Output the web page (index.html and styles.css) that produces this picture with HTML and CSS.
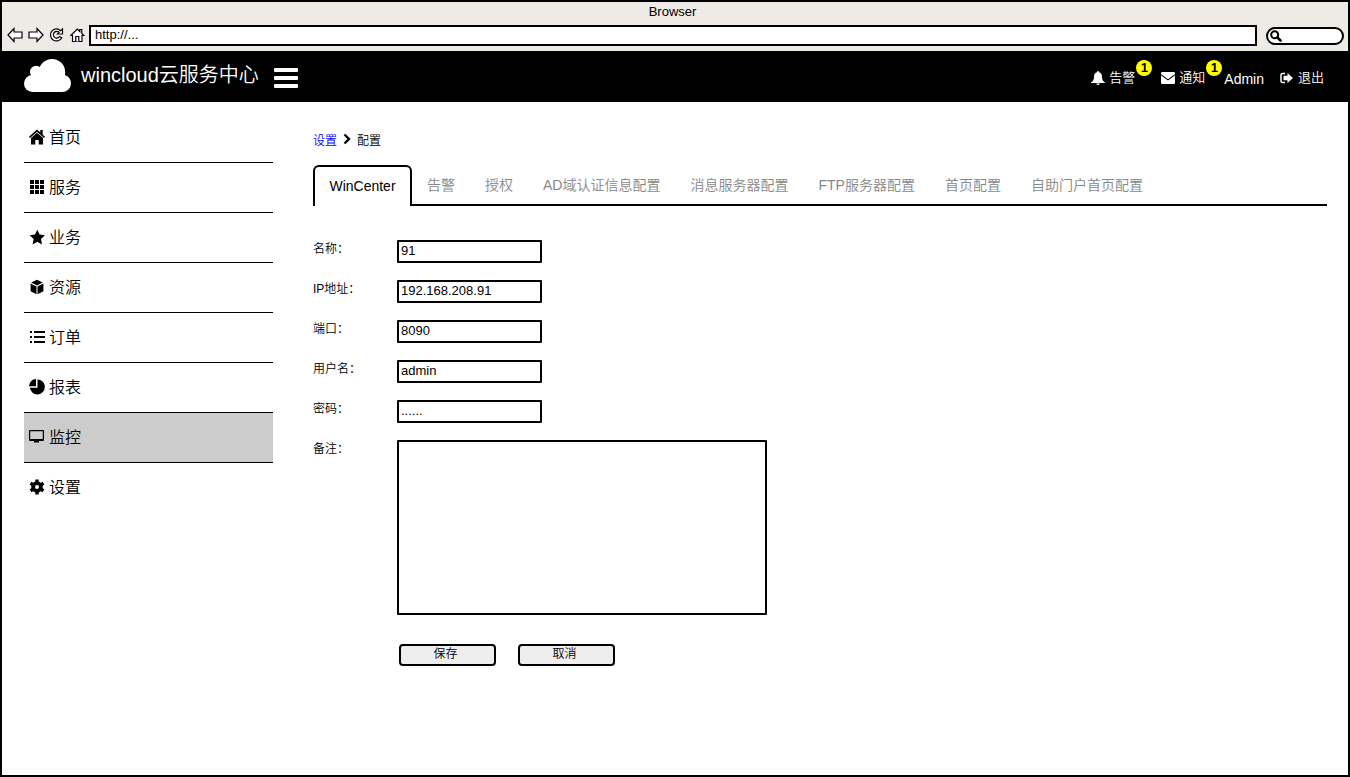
FILE: index.html
```html
<!DOCTYPE html>
<html lang="zh-CN">
<head>
<meta charset="utf-8">
<title>wincloud云服务中心</title>
<link rel="stylesheet" href="styles.css">
</head>
<body>
<div class="window">
  <div class="chrome">
    <div class="chrome-title">Browser</div>
    <div class="toolbar">
      <div class="tools">
        <button class="tool" type="button" aria-label="Back"><svg width="16" height="16" viewBox="0 0 16 16"><path d="M1 8 7 1.500V5h8v6H7v3.500Z"/></svg></button>
        <button class="tool" type="button" aria-label="Forward"><svg width="16" height="16" viewBox="0 0 16 16"><path d="M15 8 9 1.500V5H1v6h8v3.500Z"/></svg></button>
        <button class="tool" type="button" aria-label="Reload"><svg width="16" height="16" viewBox="0 0 16 16"><path d="M13.500 2v5H8.500l1.600-1.700A3.400 3.400 0 1 0 10.500 9.700l2.300 1A6 6 0 1 1 11.700 3.700Z"/></svg></button>
        <button class="tool" type="button" aria-label="Home"><svg width="16" height="16" viewBox="0 0 16 16"><path d="M.8 8.500 7.300 2l2.500 2.500V2.500h2v4l2 2H12V14.500H2.500V8.500Z"/><path d="M5.800 14.500V9.500h3v5"/></svg></button>
      </div>
      <input class="address" type="text" aria-label="Address" value="http://...">
      <label class="search">
        <svg width="12" height="12" viewBox="0 0 12 12"><circle cx="4.700" cy="4.700" r="3.500" fill="none" stroke="#000" stroke-width="2"/><path d="m7.300 7.300 3.200 3.200" stroke="#000" stroke-width="2.600" stroke-linecap="round"/></svg>
        <input class="search-input" type="text" aria-label="Search">
      </label>
    </div>
  </div>

  <header class="header">
    <svg class="cloud" width="47" height="33" viewBox="0 0 47 33" fill="#fff"><circle cx="28" cy="13.200" r="13.200"/><circle cx="12.200" cy="13" r="6.200"/><circle cx="8.500" cy="24.500" r="8.500"/><circle cx="38.200" cy="24.200" r="8.800"/><path d="M8.500 33V15L16 9l22 8v16Z"/></svg>
    <div class="brand">wincloud云服务中心</div>
    <button class="menu" type="button" aria-label="菜单"><span></span><span></span><span></span></button>
    <nav class="account">
      <a class="link" href="#"><svg width="14" height="14" viewBox="0 0 14 14" fill="#fff"><path d="M7 0q1 0 1 1.200Q11 2 11 6q0 3.500 3 5.500v.5H0v-.5Q3 9.500 3 6 3 2 6 1.200 6 0 7 0ZM5.300 12.500h3.400Q8.500 14 7 14T5.300 12.500Z"/></svg>告警</a><span class="badge">1</span>
      <a class="link notice" href="#"><svg width="14" height="12" viewBox="0 0 14 12" fill="#fff"><path d="M1.200 0h11.600Q14 0 14 1.200v.8L7 7.200 0 2v-.8Q0 0 1.200 0ZM0 3.300l7 5.200 7-5.200v7.500Q14 12 12.800 12H1.200Q0 12 0 10.800Z"/></svg>通知</a><span class="badge">1</span>
      <a class="user" href="#">Admin</a>
      <a class="link exit" href="#"><svg width="14" height="12" viewBox="0 0 14 12"><path d="M5 1.500H2.500Q1 1.500 1 3v6q0 1.500 1.500 1.500H5" fill="none" stroke="#fff" stroke-width="1.500"/><path d="M7.500 1 13 6l-5.500 5V8.200h-4V3.800h4Z" fill="#fff"/></svg>退出</a>
    </nav>
  </header>

  <div class="body">
    <nav class="sidebar">
      <a class="item" href="#"><svg width="16" height="16" viewBox="0 0 16 16"><path d="M8 .6 11.300 3.500V1h2.400v4.700L16 7.800l-1 1.200L8 2.800 1 9 0 7.800Z"/><path d="m8 3.700 6 5.300V15.500H9.700V11H6.300v4.500H2V9Z"/></svg>首页</a>
      <a class="item" href="#"><svg width="16" height="16" viewBox="0 0 16 16"><path d="M1 1h4v4H1zM6 1h4v4H6zM11 1h4v4h-4zM1 6h4v4H1zM6 6h4v4H6zM11 6h4v4h-4zM1 11h4v4H1zM6 11h4v4H6zM11 11h4v4h-4z"/></svg>服务</a>
      <a class="item" href="#"><svg width="16" height="16" viewBox="0 0 16 16"><path d="m8.300.7 2.300 4.800 5.300.8-3.900 3.700 1 5.400-4.700-2.600-4.700 2.600 1-5.400L.7 6.300 6 5.500Z"/></svg>业务</a>
      <a class="item" href="#"><svg width="16" height="16" viewBox="0 0 16 16"><path d="M8 .8 13.800 3.500 8 6.400 2.200 3.500ZM1.600 4.600l5.900 3V15.200l-5.900-3ZM14.400 4.600 8.500 7.600V15.200l5.900-3Z"/></svg>资源</a>
      <a class="item" href="#"><svg width="16" height="16" viewBox="0 0 16 16"><path d="M1 2h2v2H1zM5 2h11v2H5zM1 7h2v2H1zM5 7h11v2H5zM1 12h2v2H1zM5 12h11v2H5z"/></svg>订单</a>
      <a class="item" href="#"><svg width="16" height="16" viewBox="0 0 16 16"><path d="M8.500.400A7.500 7.500 0 1 1 .900 8.700h7.600ZM7 0v7.300H0A7.200 7.200 0 0 1 7 0Z"/></svg>报表</a>
      <a class="item active" href="#"><svg width="16" height="16" viewBox="0 0 16 16"><path fill-rule="evenodd" d="M1 1h13q1 0 1 1v9q0 1-1 1H10v1.500H5V12H1q-1 0-1-1V2q0-1 1-1Zm.2 1.200V10h12.600V2.200Z"/></svg>监控</a>
      <a class="item" href="#"><svg width="16" height="16" viewBox="0 0 16 16"><circle cx="8" cy="8" r="3.900" fill="none" stroke="#000" stroke-width="3.800"/><path d="M8 .5v3M8 12.500v3M1.500 4.250l2.600 1.500M11.900 10.250l2.600 1.500M1.500 11.750l2.600-1.500M11.900 5.750l2.600-1.500" stroke="#000" stroke-width="3.400"/></svg>设置</a>
    </nav>

    <main class="main">
      <nav class="crumbs">
        <a href="#">设置</a>
        <svg width="8" height="12" viewBox="0 0 8 12"><path d="m1.500 1.500 4.500 4.500-4.500 4.500" fill="none" stroke="#000" stroke-width="2.400"/></svg>
        <span>配置</span>
      </nav>
      <div class="tabs" role="tablist">
        <button class="tab current" type="button" role="tab" aria-selected="true">WinCenter</button>
        <button class="tab" type="button" role="tab">告警</button>
        <button class="tab" type="button" role="tab">授权</button>
        <button class="tab" type="button" role="tab">AD域认证信息配置</button>
        <button class="tab" type="button" role="tab">消息服务器配置</button>
        <button class="tab" type="button" role="tab">FTP服务器配置</button>
        <button class="tab" type="button" role="tab">首页配置</button>
        <button class="tab" type="button" role="tab">自助门户首页配置</button>
      </div>
      <form class="form">
        <label for="name">名称：</label><input class="field" id="name" type="text" value="91">
        <label for="ip">IP地址：</label><input class="field" id="ip" type="text" value="192.168.208.91">
        <label for="port">端口：</label><input class="field" id="port" type="text" value="8090">
        <label for="user">用户名：</label><input class="field" id="user" type="text" value="admin">
        <label for="pass">密码：</label><input class="field" id="pass" type="text" value="......">
        <label for="note">备注：</label><textarea class="field note" id="note"></textarea>
        <div class="actions">
          <button class="btn" type="button">保存</button>
          <button class="btn" type="button">取消</button>
        </div>
      </form>
    </main>
  </div>
</div>
</body>
</html>
```
FILE: styles.css
```css
* { box-sizing: border-box; }
body {
  margin: 0;
  font-family: "Liberation Sans", "Noto Sans CJK SC", sans-serif;
  font-size: 13px;
  font-weight: 350;
  color: #000;
}
button, input, textarea { font: inherit; color: inherit; margin: 0; }
a { color: inherit; text-decoration: none; }
svg { display: block; flex: none; }

.window {
  display: flex;
  flex-direction: column;
  min-height: 100vh;
  border: 2px solid #000;
  background: #fff;
}

/* Browser chrome */
.chrome { background: #eeebe7; padding: 0 4px 5px 5px; }
.chrome-title { height: 20px; padding-right: 6px; line-height: 20px; text-align: center; }
.toolbar { display: flex; align-items: center; gap: 3px; padding-top: 3px; }
.tools { display: flex; gap: 5px; margin-bottom: 1px; }
.tool { padding: 0; border: 0; background: none; }
.tool svg { fill: #fff; stroke: #000; stroke-width: 1.2; }
.address {
  flex: 1;
  min-width: 0;
  height: 21px;
  padding: 0 4px 2px;
  border: 2px solid #000;
  background: #fff;
}
.search {
  display: flex;
  align-items: center;
  width: 78px;
  height: 18px;
  margin-left: 6px;
  padding: 0 8px 0 2px;
  border: 2px solid #000;
  border-radius: 9px;
  background: #fff;
}
.search-input { flex: 1; min-width: 0; height: 12px; padding: 0; border: 0; background: none; outline: 0; }

/* Application header */
.header {
  display: flex;
  align-items: center;
  height: 51px;
  padding: 0 24px 2px 22px;
  background: #000;
  color: #fff;
}
.brand { margin: 0 15px 2px 10px; font-size: 20px; line-height: 28px; white-space: nowrap; }
.menu {
  display: flex;
  flex-direction: column;
  gap: 4px;
  width: 24px;
  padding: 4px 0 0;
  border: 0;
  background: none;
}
.menu span { height: 4px; border-radius: 1px; background: #fff; }
.account { display: flex; align-items: center; margin-left: auto; height: 100%; padding-top: 4px; }
.link { display: flex; align-items: center; gap: 4px; line-height: 20px; white-space: nowrap; }
.notice { margin-left: 9px; }
.exit { margin-left: 16px; }
.badge {
  align-self: flex-start;
  width: 16px;
  height: 16px;
  margin: 5px 0 0 1px;
  border-radius: 50%;
  background: #ff0;
  color: #000;
  font-size: 13px;
  font-weight: 700;
  line-height: 16px;
  text-align: center;
}
.user { margin-left: 2px; padding-top: 2px; font-size: 14px; }

/* Page body */
.body { display: flex; flex: 1; padding: 11px 21px 0 22px; }
.sidebar { width: 249px; flex: none; }
.item {
  display: flex;
  align-items: center;
  gap: 4px;
  height: 50px;
  padding: 0 0 3px 5px;
  border-bottom: 1px solid #000;
  font-size: 16px;
}
.item svg { margin-top: 2px; }
.item:last-child { border-bottom-color: transparent; }
.active { background: #ccc; }

.main { flex: 1; min-width: 0; margin-left: 40px; padding-top: 16px; }
.crumbs { display: flex; align-items: center; gap: 6px; height: 20px; font-size: 12px; }
.crumbs a { color: #00f; }

.tabs { display: flex; margin-top: 16px; box-shadow: inset 0 -2px #000; }
.tab {
  height: 41px;
  padding: 0 15px 3px;
  border: 0;
  background: none;
  color: #888;
  font-size: 14px;
  white-space: nowrap;
}
.current {
  min-width: 99px;
  padding: 0 13px 2px;
  border: 2px solid #000;
  border-bottom: 0;
  border-radius: 6px 6px 0 0;
  background: #fff;
  color: #000;
}

.form {
  display: grid;
  grid-template-columns: 84px 1fr;
  row-gap: 17px;
  justify-items: start;
  margin-top: 34px;
}
.form label { font-size: 12px; line-height: 18px; }
.field {
  width: 145px;
  height: 23px;
  padding: 0 2px 2px;
  border: 2px solid #000;
  border-radius: 1px;
  background: #fff;
}
.note { width: 370px; height: 175px; padding: 2px; resize: none; }
.actions { grid-column: 2; display: flex; gap: 22px; margin: 12px 0 0 2px; }
.btn {
  width: 97px;
  height: 22px;
  padding: 0 4px 2px 0;
  border: 2px solid #000;
  border-radius: 4px;
  background: #eee;
  font-size: 12px;
  line-height: 16px;
}
```
